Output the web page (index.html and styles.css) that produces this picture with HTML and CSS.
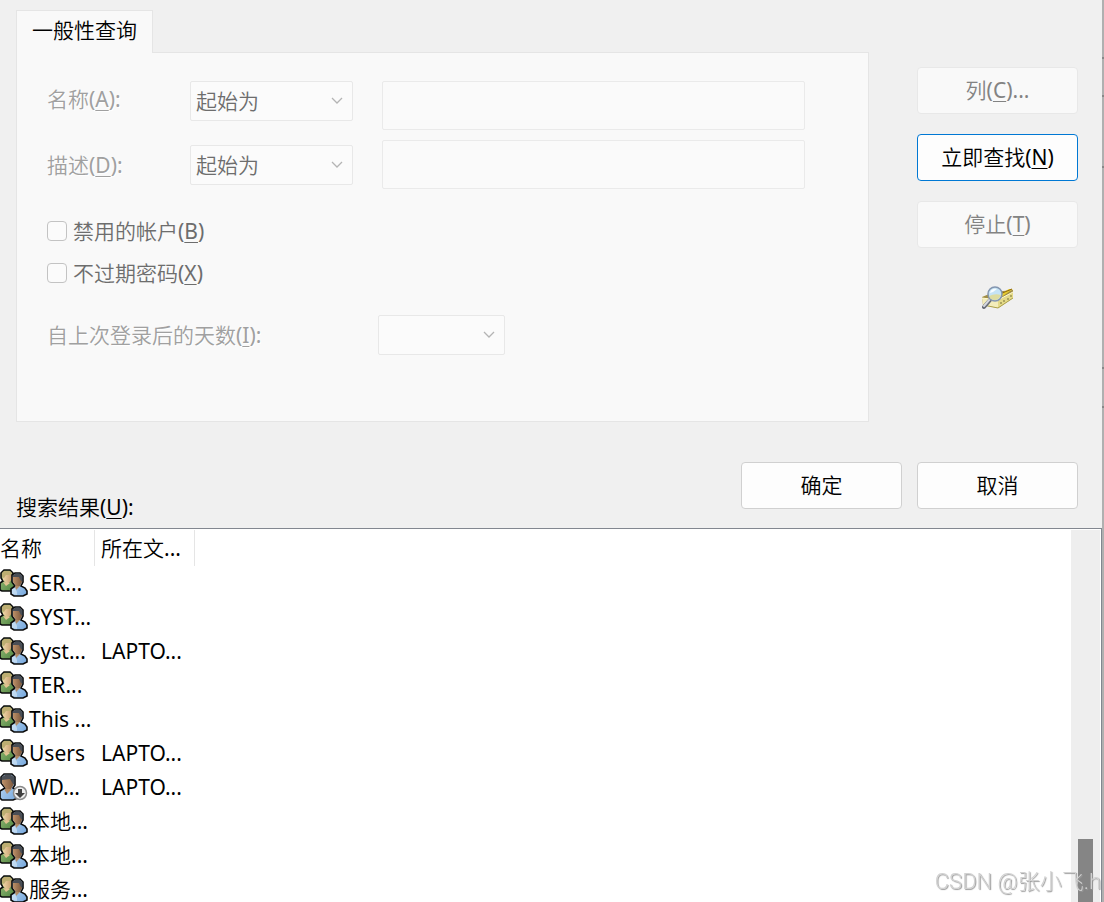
FILE: index.html
```
<!DOCTYPE html>
<html lang="zh-CN">
<head>
<meta charset="UTF-8">
<meta name="viewport" content="width=device-width, initial-scale=1.0">
<title>选择用户或组</title>
<link rel="stylesheet" href="styles.css">
</head>
<body>
<!-- 图标定义 -->
<svg class="defs" width="0" height="0" aria-hidden="true">
    <defs>
        <linearGradient id="green" x1="0" y1="0" x2="1" y2="1">
            <stop offset="0" stop-color="#9cc07c"/>
            <stop offset="1" stop-color="#4f8440"/>
        </linearGradient>
        <linearGradient id="blue" x1="0" y1="0" x2="1" y2="1">
            <stop offset="0" stop-color="#c4dff6"/>
            <stop offset="1" stop-color="#74a6dc"/>
        </linearGradient>
        <linearGradient id="skin" x1="0" y1="0" x2="1" y2="0">
            <stop offset="0" stop-color="#bd9068"/>
            <stop offset="1" stop-color="#7a573c"/>
        </linearGradient>
        <linearGradient id="fair" x1="0" y1="0" x2="1" y2="0">
            <stop offset="0" stop-color="#f3dcae"/>
            <stop offset="1" stop-color="#c39a6b"/>
        </linearGradient>
        <symbol id="group" viewBox="0 0 28 28">
            <path d="M0 14 L3 12 L1 9 V4 L4 1 H10 L13 4 V12 L15 17 V22 H2 L0 21 Z" fill="url(#green)" stroke="#0c0c0c" stroke-width="1.6"/>
            <path d="M2 5 H12 V10 L9 14 H6 L3 11 Z" fill="url(#fair)"/>
            <path d="M2 8 V4 L4 2 H10 L12 4 V6 H6 L4 9 Z" fill="#bdae72"/>
            <path d="M3 13 L6 17 L10 14 Z" fill="#e2c391"/>
            <path d="M11 25 V20 L15 17 L12 13 V6 L15 4 H20 L23 7 V13 L21 17 L25 19 L27 22 V25 L23 27 H14 Z" fill="url(#blue)" stroke="#0c0c0c" stroke-width="1.6"/>
            <path d="M13 8 H22 V13 L20 17 H16 L13 13 Z" fill="url(#skin)"/>
            <path d="M13 8 V6 L15 5 H20 L22 7 V12 H21 L19 8 Z" fill="#4a4e55"/>
            <path d="M15 17 L16 21 L20 17 Z" fill="#b08a66"/>
            <path d="M12 20 L15 19 L17 23 V26 L12 25 Z" fill="#e6f2fc" opacity=".5"/>
        </symbol>
        <symbol id="user" viewBox="0 0 28 28">
            <path d="M0 18 L5 15 L1 10 V4 L4 1 H12 L15 4 V12 L13 15 L18 18 V25 L13 27 H2 L0 25 Z" fill="url(#blue)" stroke="#0c0c0c" stroke-width="1.6"/>
            <path d="M2 6 H14 V11 L11 16 H6 L2 10 Z" fill="url(#skin)"/>
            <path d="M2 7 V4 L5 2 H11 L14 4 V11 H13 L10 6 Z" fill="#4a4e55"/>
            <path d="M4 16 L7 21 L12 16 Z" fill="#b08a66"/>
            <circle cx="20" cy="20" r="6.5" fill="#eeeeee" stroke="#8a8a8a" stroke-width="1.5"/>
            <path d="M18 16 H22 V20 H25 L20 25 L15 20 H18 Z" fill="#404040"/>
        </symbol>
        <symbol id="chevron" viewBox="0 0 12 8">
            <path d="M1 1 L6 6 L11 1" fill="none" stroke="#b4b4b4" stroke-width="1.3"/>
        </symbol>
    </defs>
</svg>

<div class="window">
    <main class="dialog">
        <div class="query">
            <div class="tabs">
                <button type="button" class="tab">一般性查询</button>
                <form class="panel">
                    <div class="field first">
                        <label for="name-mode">名称(<u>A</u>):</label>
                        <div class="dropdown">
                            <select id="name-mode" disabled><option>起始为</option></select>
                            <svg><use href="#chevron"/></svg>
                        </div>
                        <input type="text" aria-label="名称" disabled>
                    </div>
                    <div class="field">
                        <label for="desc-mode">描述(<u>D</u>):</label>
                        <div class="dropdown">
                            <select id="desc-mode" disabled><option>起始为</option></select>
                            <svg><use href="#chevron"/></svg>
                        </div>
                        <input type="text" aria-label="描述" disabled>
                    </div>
                    <div class="checks">
                        <label><input type="checkbox" disabled><span>禁用的帐户(<u>B</u>)</span></label>
                        <label><input type="checkbox" disabled><span>不过期密码(<u>X</u>)</span></label>
                    </div>
                    <div class="days">
                        <label for="days">自上次登录后的天数(<u>I</u>):</label>
                        <div class="dropdown">
                            <select id="days" disabled><option></option></select>
                            <svg><use href="#chevron"/></svg>
                        </div>
                    </div>
                </form>
            </div>
            <div class="actions">
                <button type="button" disabled>列(<u>C</u>)...</button>
                <button type="button" class="default">立即查找(<u>N</u>)</button>
                <button type="button" disabled>停止(<u>T</u>)</button>
                <svg class="search-icon" viewBox="0 0 32 24" aria-hidden="true">
                    <path d="M0 11 L12 6 L31 4 V12 L16 22 L1 19 Z" fill="#a08d45"/>
                    <path d="M13 11 L27 3 L31 3 L18 12 Z" fill="#e9cd2c"/>
                    <path d="M18 8 L30 3" stroke="#8b6515"/>
                    <path d="M0 12 L16 14 V22 L1 19 Z" fill="#f3edbb"/>
                    <path d="M16 14 L31 6 V12 L16 22 Z" fill="#e4da89"/>
                    <path d="M0 12 L16 14 L31 6" fill="none" stroke="#fffbd6"/>
                    <path d="M1 19 L16 22 L31 12" fill="none" stroke="#aea34c"/>
                    <path d="M19 16 V18 M22 14 V16 M26 12 V14 M29 9 V11" stroke="#777139"/>
                    <path d="M8 14 L2 21" stroke="#686d78" stroke-width="4" stroke-linecap="round"/>
                    <path d="M8 13 L2 20" stroke="#d4d7df" stroke-width="2" stroke-linecap="round"/>
                    <circle cx="13" cy="8" r="7" fill="#c5e3f5" stroke="#8496b0" stroke-width="1.5"/>
                    <path d="M7 10 Q13 7 19 9 Q17 14 13 14 Q8 14 7 10" fill="#dddca0"/>
                    <path d="M8 7 Q9 2 15 3 L11 6 Z" fill="#f7fcff"/>
                </svg>
            </div>
        </div>

        <div class="footer">
            <h2 id="results-title">搜索结果(<u>U</u>):</h2>
            <button type="button">确定</button>
            <button type="button">取消</button>
        </div>

        <div class="results">
            <div class="list">
                <table aria-labelledby="results-title">
                    <thead>
                        <tr><th class="col-name">名称</th><th class="col-folder">所在文...</th></tr>
                    </thead>
                    <tbody>
                        <tr><td><svg><use href="#group"/></svg>SER...</td><td></td></tr>
                        <tr><td><svg><use href="#group"/></svg>SYST...</td><td></td></tr>
                        <tr><td><svg><use href="#group"/></svg>Syst...</td><td>LAPTO...</td></tr>
                        <tr><td><svg><use href="#group"/></svg>TER...</td><td></td></tr>
                        <tr><td><svg><use href="#group"/></svg>This ...</td><td></td></tr>
                        <tr><td><svg><use href="#group"/></svg>Users</td><td>LAPTO...</td></tr>
                        <tr><td><svg><use href="#user"/></svg>WD...</td><td>LAPTO...</td></tr>
                        <tr><td><svg><use href="#group"/></svg>本地...</td><td></td></tr>
                        <tr><td><svg><use href="#group"/></svg>本地...</td><td></td></tr>
                        <tr><td><svg><use href="#group"/></svg>服务...</td><td></td></tr>
                    </tbody>
                </table>
            </div>
            <div class="scrollbar"><div class="thumb"></div></div>
        </div>
    </main>
    <div class="edge"></div>
</div>
<div class="watermark">CSDN @张小飞.h</div>
</body>
</html>
```
FILE: styles.css
```
* {
    box-sizing: border-box;
}

body {
    margin: 0;
    background: #f0f0f0;
    color: #000;
    font-family: "Noto Sans", "Noto Sans CJK SC DemiLight", "Noto Sans CJK SC", sans-serif;
    font-size: 21px;
    line-height: 28px;
}

button,
input,
select {
    font: inherit;
    color: inherit;
}

u {
    text-decoration-thickness: 1px;
    text-underline-offset: 3px;
}

.defs {
    display: block;
}

.window {
    display: flex;
    height: 100vh;
    overflow: hidden;
}

.dialog {
    flex: 1;
    min-width: 0;
    display: flex;
    flex-direction: column;
}

.edge {
    width: 2px;
    background: linear-gradient(#888, #888) 0 57px / 2px 2px no-repeat,
        linear-gradient(#888, #888) 0 95px / 2px 2px no-repeat,
        linear-gradient(#888, #888) 0 166px / 2px 2px no-repeat,
        linear-gradient(#888, #888) 0 367px / 2px 2px no-repeat,
        linear-gradient(#888, #888) 0 406px / 2px 2px no-repeat,
        #b0b0b0;
}

/* 查询区域 */
.query {
    display: flex;
    gap: 48px;
    padding: 10px 24px 0 16px;
}

.tabs {
    flex: 1;
    display: flex;
    flex-direction: column;
    align-items: flex-start;
}

.tab {
    height: 43px;
    margin-bottom: -1px;
    padding: 0 15px 4px;
    border: 1px solid #e5e5e5;
    border-bottom: 0;
    background: #f9f9f9;
    z-index: 1;
}

.panel {
    width: 100%;
    padding: 28px 63px 66px 30px;
    border: 1px solid #e5e5e5;
    background: #f9f9f9;
}

.field {
    display: grid;
    grid-template-columns: 143px 163px 1fr;
    align-items: center;
    margin-bottom: 10px;
}

.field.first {
    align-items: start;
}

.field.first label {
    padding-top: 4px;
}

.field > label,
.days > label {
    color: #a0a0a0;
    text-shadow: 1px 1px #fff;
}

.field input {
    width: auto;
    min-width: 0;
    height: 49px;
    margin-left: 29px;
    border: 1px solid #eaeaea;
    border-radius: 2px;
    background: #fafafa;
}

.dropdown {
    display: grid;
    align-items: center;
    justify-items: end;
}

.dropdown select,
.dropdown svg {
    grid-area: 1 / 1;
}

.dropdown select {
    appearance: none;
    width: 100%;
    height: 40px;
    padding: 0 5px;
    border: 1px solid #e8e8e8;
    border-radius: 2px;
    background: #fbfbfb;
    color: #6d6d6d;
    opacity: 1;
}

.dropdown svg {
    width: 12px;
    height: 8px;
    margin-right: 10px;
    pointer-events: none;
}

.checks {
    display: grid;
    gap: 14px;
    padding-top: 18px;
    color: #6d6d6d;
}

.checks label {
    display: flex;
    align-items: center;
    gap: 6px;
}

.checks input {
    appearance: none;
    width: 20px;
    height: 20px;
    margin: 0;
    border: 1px solid #c3c3c3;
    border-radius: 4px;
    background: #fbfbfb;
}

.days {
    display: grid;
    grid-template-columns: 331px 127px;
    align-items: center;
    padding-top: 28px;
}

/* 按钮 */
.actions {
    width: 161px;
    padding-top: 57px;
    display: flex;
    flex-direction: column;
    gap: 20px;
}

.actions button,
.footer button {
    width: 161px;
    height: 47px;
    padding: 0 0 2px;
    border: 1px solid #d0d0d0;
    border-radius: 4px;
    background: #fdfdfd;
}

.actions button:disabled {
    border-color: #e8e8e8;
    background: #f9f9f9;
    color: #838383;
}

.actions .default {
    border-color: #0078d4;
}

.search-icon {
    width: 32px;
    height: 24px;
    margin-top: 18px;
    align-self: center;
}

.footer {
    display: flex;
    gap: 15px;
    padding: 40px 24px 0 16px;
    height: 106px;
}

.footer h2 {
    flex: 1;
    align-self: flex-end;
    margin: 0;
    padding-bottom: 7px;
    font-size: 21px;
    font-weight: 400;
}

/* 搜索结果 */
.results {
    flex: 1;
    min-height: 0;
    display: flex;
    padding: 1px 1px 0 0;
    border: solid #828790;
    border-width: 1px 1px 0 0;
    background: #fff;
}

.list {
    flex: 1;
    overflow: hidden;
}

table {
    table-layout: fixed;
    width: 195px;
    border-collapse: separate;
    border-spacing: 0;
    white-space: nowrap;
}

th {
    height: 36px;
    padding: 0;
    border-right: 1px solid #e5e5e5;
    font-weight: 400;
    text-align: left;
}

.col-name {
    width: 95px;
}

.col-folder {
    width: 100px;
    padding-left: 6px;
}

td {
    height: 34px;
    padding: 0;
}

td + td {
    padding-left: 6px;
}

td svg {
    width: 28px;
    height: 28px;
    margin-right: 1px;
    vertical-align: -6px;
}

.scrollbar {
    width: 29px;
    display: flex;
    align-items: flex-end;
    justify-content: center;
    background: #eee;
}

.thumb {
    width: 15px;
    height: 63px;
    background: #858585;
}

.watermark {
    position: fixed;
    right: 3px;
    bottom: 6px;
    color: #d2d2d2;
    font-family: Roboto, "Noto Sans CJK SC", sans-serif;
    font-size: 22px;
    font-weight: 300;
    text-shadow: 1px 1px 1px #999;
}
```
